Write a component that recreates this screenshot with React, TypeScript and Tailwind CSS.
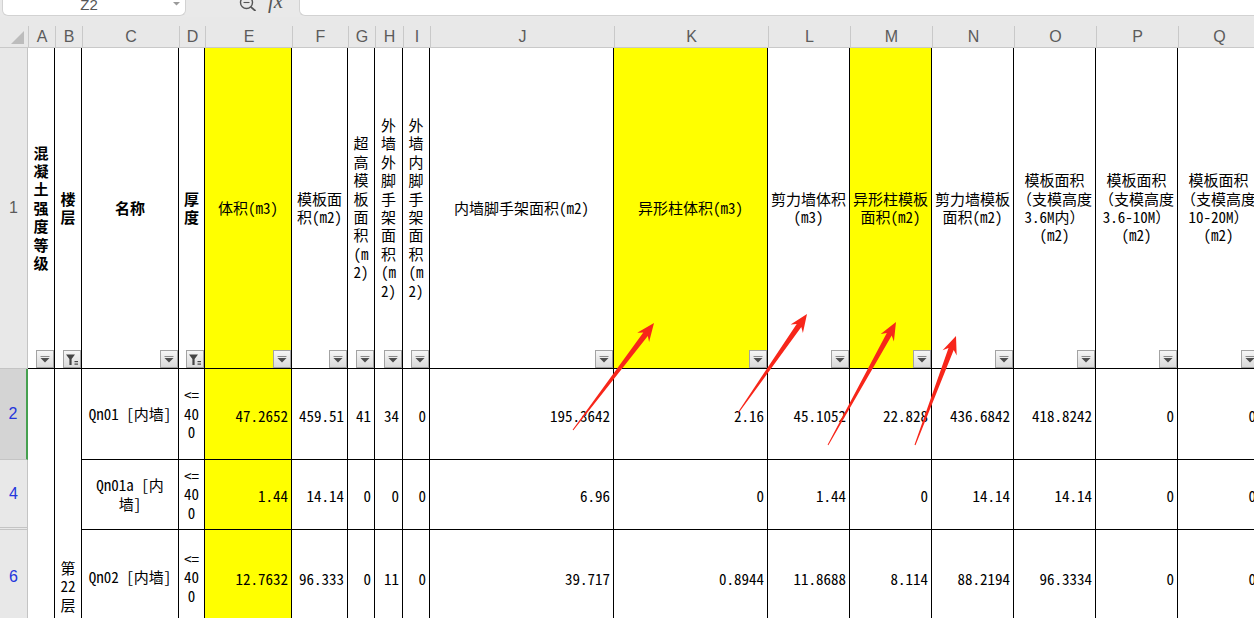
import React from 'react';

const MONO = "font-['Noto_Sans_Mono_CJK_SC','Liberation_Mono','Noto_Sans_CJK_SC',monospace]";
const SANS = "font-['Liberation_Sans','Noto_Sans_CJK_SC',sans-serif]";

const LETTERS = ['A', 'B', 'C', 'D', 'E', 'F', 'G', 'H', 'I', 'J', 'K', 'L', 'M', 'N', 'O', 'P', 'Q'];

type Head = { lines: string[]; bold?: boolean; yellow?: boolean; funnel?: boolean };

const HEADS: Head[] = [
    { lines: ['混', '凝', '土', '强', '度', '等', '级'], bold: true },
    { lines: ['楼', '层'], bold: true, funnel: true },
    { lines: ['名称'], bold: true },
    { lines: ['厚', '度'], bold: true, funnel: true },
    { lines: ['体积(m3)'], yellow: true },
    { lines: ['模板面', '积(m2)'] },
    { lines: ['超', '高', '模', '板', '面', '积', '(m', '2)'] },
    { lines: ['外', '墙', '外', '脚', '手', '架', '面', '积', '(m', '2)'] },
    { lines: ['外', '墙', '内', '脚', '手', '架', '面', '积', '(m', '2)'] },
    { lines: ['内墙脚手架面积(m2)'] },
    { lines: ['异形柱体积(m3)'], yellow: true },
    { lines: ['剪力墙体积', '(m3)'] },
    { lines: ['异形柱模板', '面积(m2)'], yellow: true },
    { lines: ['剪力墙模板', '面积(m2)'] },
    { lines: ['模板面积', '（支模高度', '3.6M内）', '(m2)'] },
    { lines: ['模板面积', '（支模高度', '3.6-10M）', '(m2)'] },
    { lines: ['模板面积', '（支模高度', '10-20M）', '(m2)'] },
];

const ROWS = [
    {
        n: '2',
        selected: true,
        name: ['Qn01 [内墙]'],
        vals: ['47.2652', '459.51', '41', '34', '0', '195.3642', '2.16', '45.1052', '22.828', '436.6842', '418.8242', '0', '0'],
    },
    {
        n: '4',
        name: ['Qn01a [内', '墙]'],
        vals: ['1.44', '14.14', '0', '0', '0', '6.96', '0', '1.44', '0', '14.14', '14.14', '0', '0'],
    },
    {
        n: '6',
        name: ['Qn02 [内墙]'],
        vals: ['12.7632', '96.333', '0', '11', '0', '39.717', '0.8944', '11.8688', '8.114', '88.2194', '96.3334', '0', '0'],
    },
];

// tail x, tail y, tip x, tip y
const ARROWS = [
    [573, 430, 654, 323],
    [738, 413, 807, 314],
    [828, 445, 896, 322],
    [915, 445, 956, 336],
];

function arrowPoints([tx, ty, px, py]: number[]) {
    const dx = px - tx;
    const dy = py - ty;
    const len = Math.hypot(dx, dy);
    const ux = dx / len;
    const uy = dy / len;
    const nx = -uy;
    const ny = ux;
    const hl = 18;
    const hw = 7.5;
    const sw = 2.8;
    const bx = px - ux * hl;
    const by = py - uy * hl;
    const sx = px - ux * (hl - 4);
    const sy = py - uy * (hl - 4);
    const pts = [
        [tx + nx * 0.5, ty + ny * 0.5],
        [sx + nx * sw, sy + ny * sw],
        [bx + nx * hw, by + ny * hw],
        [px, py],
        [bx - nx * hw, by - ny * hw],
        [sx - nx * sw, sy - ny * sw],
        [tx - nx * 0.5, ty - ny * 0.5],
    ];
    return pts.map(p => `${p[0].toFixed(1)},${p[1].toFixed(1)}`).join(' ');
}

function FilterButton({ funnel }: { funnel?: boolean }) {
    return (
        <div className="absolute right-0 bottom-0 w-[18px] h-[18px] border border-[#a3a3a3] bg-linear-to-b from-[#f6f6f6] to-[#dadada] flex items-center justify-center">
            {funnel ? (
                <svg width="14" height="13" viewBox="0 0 14 13">
                    <polygon points="1,1.5 10,1.5 6.6,6 6.6,12 4.4,12 4.4,6" fill="#454545" />
                    <rect x="9.5" y="8" width="3.5" height="1.2" fill="#454545" />
                    <rect x="9.5" y="10.5" width="3.5" height="1.2" fill="#454545" />
                </svg>
            ) : (
                <svg width="10" height="7" viewBox="0 0 10 7">
                    <rect x="0.5" y="0" width="9" height="1" fill="#8a8a8a" />
                    <polygon points="0.5,2 9.5,2 5,6.5" fill="#4d4d4d" />
                </svg>
            )}
        </div>
    );
}

function Lines({ lines }: { lines: string[] }) {
    return (
        <div className="flex flex-col items-center leading-[18.4px]">
            {lines.map((l, i) => (
                <span key={i} className="whitespace-pre">{l}</span>
            ))}
        </div>
    );
}

export default function App() {
    return (
        <div className={`relative w-[1254px] h-[618px] overflow-hidden bg-white ${MONO} text-[15px] text-black`}>
            {/* formula bar */}
            <div className="h-[17px] bg-[#e9e9e9] flex">
                <div className="ml-[2px] w-[184px] h-[16px] bg-white border border-t-0 border-[#d2d2d2] rounded-b-[6px] overflow-hidden flex">
                    <div className={`flex-1 flex justify-center pl-[4px] -mt-[5px] leading-[20px] text-[15px] text-[#555] ${SANS}`}>Z2</div>
                    <svg width="12" height="8" viewBox="0 0 12 8" className="mt-[1px] mr-[2px]">
                        <polygon points="2,1 9,1 5.5,4.5" fill="#9a9a9a" />
                    </svg>
                </div>
                <div className="w-[113px] h-[17px] overflow-hidden flex items-start pl-[52px] gap-[8px]">
                    <svg width="22" height="14" viewBox="0 0 22 14" className="-mt-[3px]">
                        <circle cx="8.5" cy="5.5" r="6" fill="none" stroke="#555" strokeWidth="1.4" />
                        <line x1="12.8" y1="9.8" x2="17.5" y2="14" stroke="#555" strokeWidth="1.8" />
                        <line x1="5.5" y1="5.5" x2="11.5" y2="5.5" stroke="#555" strokeWidth="1.1" />
                    </svg>
                    <span className="-mt-[10px] leading-[22px] text-[21px] italic text-[#555] font-['Liberation_Serif',serif]">fx</span>
                </div>
                <div className="flex-1 h-[16px] bg-white border border-t-0 border-r-0 border-[#d2d2d2] rounded-bl-[6px]" />
            </div>

            <div className="grid grid-cols-[28px_27px_27px_97px_26px_87px_56px_27px_28px_27px_184px_154px_82px_82px_82px_82px_82px_82px] grid-rows-[31px_321px_91px_70px_96px]">
                {/* column letters */}
                <div className="bg-[#e8e8e8] border-b border-[#c9c9c9] flex items-end justify-end pr-[4px] pb-[3px]">
                    <svg width="13" height="13" viewBox="0 0 13 13">
                        <polygon points="13,0 13,13 0,13" fill="#bcbcbc" />
                    </svg>
                </div>
                {LETTERS.map(l => (
                    <div key={l} className="bg-[#e8e8e8] border-b border-[#c9c9c9] flex items-end">
                        <div className={`w-full h-[21px] border-l border-[#c9c9c9] flex items-center justify-center text-[16px] text-[#5b5b5b] ${SANS}`}>
                            {l}
                        </div>
                    </div>
                ))}

                {/* row 1 : headers */}
                <div className={`bg-[#e8e8e8] border-r border-b border-[#c4c4c4] flex items-center justify-center text-[16px] text-[#5b5b5b] ${SANS}`}>
                    1
                </div>
                {HEADS.map((h, i) => (
                    <div
                        key={i}
                        className={`relative border-r border-b border-black flex items-center justify-center text-center ${h.yellow ? 'bg-[#ffff00]' : 'bg-white'} ${h.bold ? 'font-bold' : ''}`}
                    >
                        <Lines lines={h.lines} />
                        <FilterButton funnel={h.funnel} />
                    </div>
                ))}

                {/* data rows */}
                {ROWS.map((r, ri) => (
                    <React.Fragment key={r.n}>
                        <div
                            className={`col-start-1 flex items-center justify-center text-[16px] text-[#2436dc] ${SANS} ${
                                r.selected
                                    ? 'bg-[#d4d4d4] border-r-2 border-r-[#45a04f] border-b border-b-[#c4c4c4]'
                                    : 'bg-[#e8e8e8] border-r border-r-[#c4c4c4] border-b-[3px] border-double border-b-[#c4c4c4]'
                            }`}
                        >
                            {r.n}
                        </div>
                        {ri === 0 && (
                            <>
                                <div className="row-span-3 border-r border-b border-black bg-white" />
                                <div className="row-span-3 border-r border-b border-black bg-white flex flex-col items-center pt-[190px]">
                                    <Lines lines={['第', '22', '层']} />
                                </div>
                            </>
                        )}
                        <div className="col-start-4 border-r border-b border-black flex items-center justify-center text-center">
                            <Lines lines={r.name} />
                        </div>
                        <div className="border-r border-b border-black flex items-center justify-center">
                            <Lines lines={['<=', '40', '0']} />
                        </div>
                        {r.vals.map((v, vi) => (
                            <div
                                key={vi}
                                className={`border-r border-b border-black flex items-center justify-end pr-[3px] pt-[4px] whitespace-nowrap ${vi === 0 ? 'bg-[#ffff00]' : 'bg-white'}`}
                            >
                                {v}
                            </div>
                        ))}
                    </React.Fragment>
                ))}
            </div>

            {/* red annotation arrows */}
            <svg className="absolute top-0 left-0 pointer-events-none" width="1254" height="618">
                {ARROWS.map((a, i) => (
                    <polygon key={i} points={arrowPoints(a)} fill="#f7261a" />
                ))}
            </svg>
        </div>
    );
}
